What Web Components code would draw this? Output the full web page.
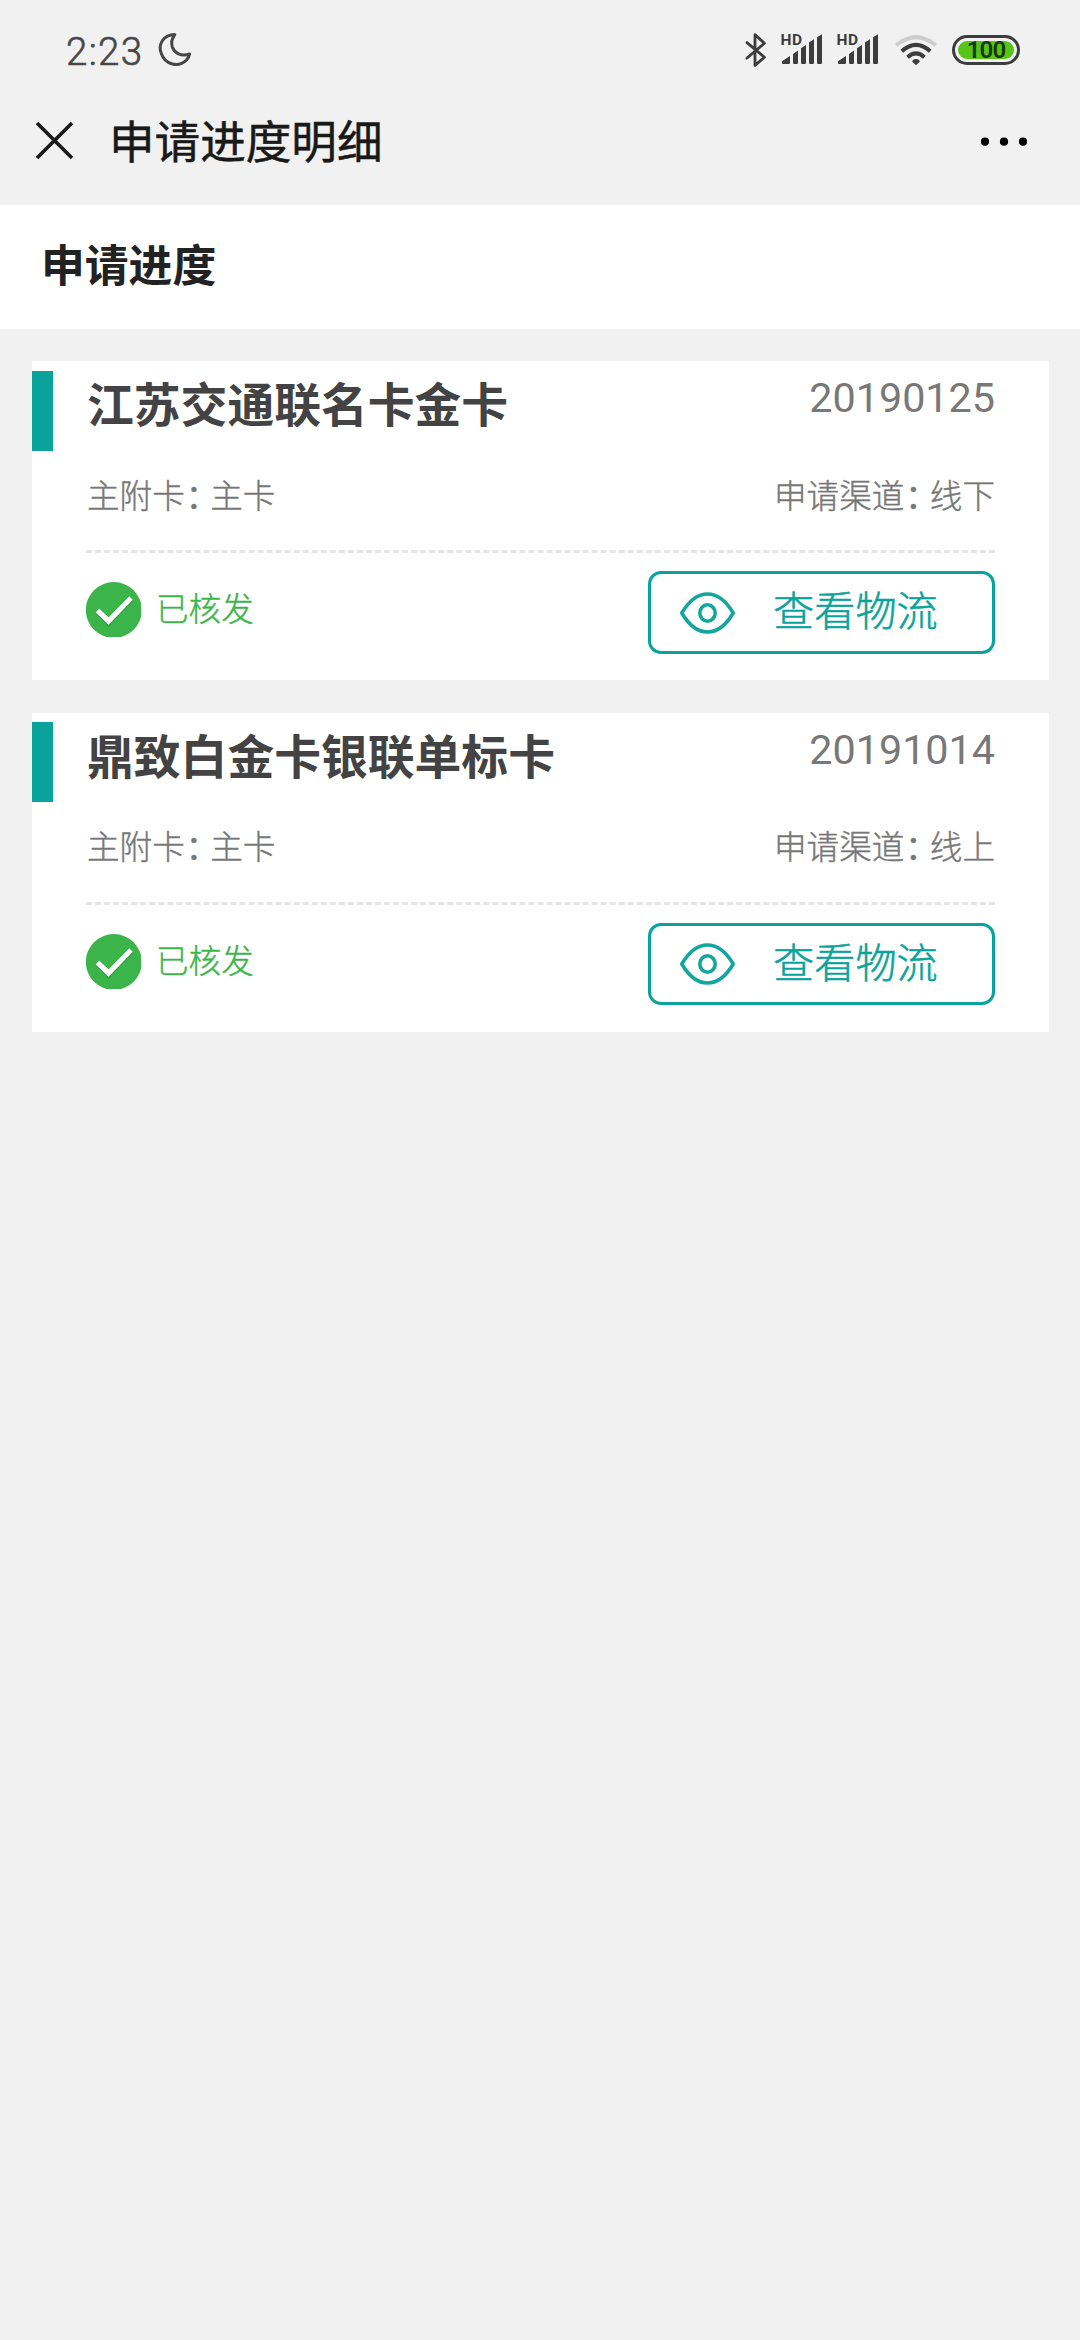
<!DOCTYPE html>
<html lang="zh-CN">
<head>
<meta charset="utf-8">
<title>申请进度明细</title>
<style>
html,body{margin:0;padding:0;background:#f1f1f1}
body{width:1080px;height:2340px;overflow:hidden;font-family:"Noto Sans CJK SC",sans-serif}
</style>
</head>
<body>
<progress-page></progress-page>
<script>
function define(name, html){
  customElements.define(name, class extends HTMLElement{
    constructor(){
      super();
      this.attachShadow({mode:'open'}).innerHTML = html;
    }
  });
}

define('signal-icon', `
<style>:host{display:block;width:42px;height:36px}svg{display:block}text{font:700 15.5px Roboto,sans-serif;letter-spacing:.6px}</style>
<svg width="42" height="36" viewBox="0 0 42 36" fill="#3c3c3c">
<text x="-.5" y="14.5">HD</text>
<path d="M1 33V31.3L9 26V33a1 1 0 0 1-1 1H2a1 1 0 0 1-1-1zM12 24l5-3.6V33a1 1 0 0 1-1 1H13a1 1 0 0 1-1-1zM20 18.3l5-3.4V33a1 1 0 0 1-1 1H21a1 1 0 0 1-1-1zM28 12.6l5-3.4V33a1 1 0 0 1-1 1H29a1 1 0 0 1-1-1zM36 7.2l5-3V33a1 1 0 0 1-1 1H37a1 1 0 0 1-1-1z"/>
</svg>`);

define('battery-icon', `
<style>:host{display:flex;box-sizing:border-box;width:68px;height:30px;border:3.4px solid #3c3c3c;border-radius:15px;padding:3px}
span{flex:1;display:flex;align-items:center;justify-content:center;background:#57c417;border-radius:9px;color:#17380a;font:600 24px/18px Roboto,sans-serif;letter-spacing:-.9px}</style>
<span><slot></slot></span>`);

define('status-bar', `
<style>
:host{display:flex;box-sizing:border-box;height:74px;padding:0 60px 0 66px;align-items:flex-start;color:#464646}
.time{font:300 38.5px/44px Roboto,sans-serif;-webkit-text-stroke:.6px #464646;margin-top:30px;width:91px;letter-spacing:1.3px}
svg{display:block}
.moon{margin-top:32px}
.right{display:flex;margin-left:auto;align-items:flex-start}
.bt{margin:32px 14px 0 0}
signal-icon{margin:30px 14px 0 0}
.wifi{margin:34px 14px 0 1px}
battery-icon{margin-top:35px}
</style>
<div class="time">2:23</div>
<svg class="moon" width="36" height="36" viewBox="0 0 36 36" fill="none" stroke="#464646" stroke-width="3" stroke-linejoin="round"><path d="M17.8 2.6C5.8 3 1 12.5 4.2 21.2C8.2 33 21.5 36 29.5 28C31.3 26 32.3 24 32.6 22C24 25 17.5 21 15.4 15.2C14 11 14.8 6.5 17.8 2.6Z"/></svg>
<div class="right">
<svg class="bt" width="22" height="36" viewBox="0 0 22 36" fill="none" stroke="#3c3c3c" stroke-width="2.8" stroke-linejoin="round" stroke-linecap="round"><path d="M2 10.6L19.4 25.2L10 33.4V2.6L19.4 11.2L2 26"/></svg>
<signal-icon></signal-icon><signal-icon></signal-icon>
<svg class="wifi" width="44" height="34" viewBox="0 0 44 34" fill="none" stroke="#3c3c3c" stroke-width="4" stroke-linecap="butt"><path stroke="#cdcdcd" d="M2.3 11.2Q22 -5 41.7 11.2"/><path d="M7.8 17.2Q22 4.6 36.200 17.200"/><path d="M13.600 23.200Q22 15.600 30.400 23.200"/><path stroke="none" fill="#3c3c3c" d="M22 31.200L18 27.400Q19 25 22 25T26 27.400Z"/></svg>
<battery-icon>100</battery-icon>
</div>`);

define('nav-bar', `
<style>
:host{display:flex;box-sizing:border-box;height:131px;align-items:flex-start;padding:0 52px 0 34px}
svg{display:block}
.close{margin-top:46px}
h1{margin:33px 0 0 34px;font-weight:400;font-size:45.6px;line-height:64px;color:#191919;-webkit-text-stroke:.5px #191919}
.more{margin:62px 0 0 auto}
</style>
<svg class="close" width="41" height="41" viewBox="0 0 41 41" stroke="#191919" stroke-width="3.6"><path d="M3 3L38 38M38 3L3 38"/></svg>
<h1><slot></slot></h1>
<svg class="more" width="48" height="12" viewBox="0 0 48 12"><circle cx="5" cy="5.700" r="4.100"/><circle cx="24" cy="5.700" r="4.100"/><circle cx="43" cy="5.700" r="4.100"/></svg>`);

define('section-title', `
<style>:host{display:block;box-sizing:border-box;height:124px;background:#fff;padding:26px 0 0 41px}
h2{margin:0;font-size:43.8px;line-height:64px;color:#222;font-weight:700}</style>
<h2><slot></slot></h2>`);

define('track-button', `
<style>
button{display:flex;box-sizing:border-box;width:347px;height:var(--button-height,83px);margin:0;padding:0 0 0 29px;border:3px solid #0aa39c;border-radius:13px;background:#fff;color:#0aa39c;align-items:flex-start;font:300 41.2px/60px "Noto Sans CJK SC",sans-serif;-webkit-text-stroke:.5px #0aa39c}
:host{display:block}
svg{display:block;margin-top:var(--eye-top,18px)}
span{margin-left:38px;margin-top:4px}
</style>
<button><svg width="55" height="42" viewBox="0 0 55 42" fill="none" stroke="#12a69f" stroke-width="3.600"><path stroke-linejoin="round" d="M1.800 21Q13 2 27.500 2T53.200 21Q42 40 27.500 40T1.800 21Z"/><ellipse cx="27.500" cy="21" rx="7.700" ry="8.200"/></svg><span><slot></slot></span></button>`);

define('apply-card', `
<style>
:host{display:block;box-sizing:border-box;height:319px;background:#fff;margin:0 31px 33px 32px}
.row{display:flex;justify-content:space-between;align-items:flex-start}
.head{height:var(--head-height,109px)}
.mark{width:21px;height:80px;margin-top:var(--mark-top,10px);background:#0aa39c}
h3{margin:9px 0 0 34px;font-size:46.8px;line-height:64px;font-weight:700;color:#434343;white-space:nowrap}
.date{margin:13px 54px 0 auto;font:400 41.3px/48px Roboto,sans-serif;color:#787878}
.meta{height:calc(189px - var(--head-height,109px));padding:0 54px 0 55px;font-weight:300;font-size:32.600px;line-height:48px;color:#777;-webkit-text-stroke:.4px #777}
.line{margin:0 54px;border-top:3px dashed #e5e5e5}
.foot{padding:18px 54px 0 54px}
.state{display:flex;align-items:flex-start;color:#3bb44a;font-weight:300;font-size:32.600px;line-height:48px;-webkit-text-stroke:.4px #3bb44a}
.state svg{display:block;margin-top:11px}
.state span{margin:12px 0 0 15px}
</style>
<div class="row head"><div class="mark"></div><h3><slot name="name"></slot></h3><div class="date"><slot name="date"></slot></div></div>
<div class="row meta"><slot name="kind"></slot><slot name="channel"></slot></div>
<div class="line"></div>
<div class="row foot">
<div class="state"><svg width="55" height="55" viewBox="0 0 55 55"><circle cx="27.800" cy="28" r="28" fill="#3bb44a"/><path d="M11.500 29L22.500 39.500L45 16.500" fill="none" stroke="#2ca33d" stroke-width="7"/><path d="M11.500 28.500L22.500 39L45 16" fill="none" stroke="#fff" stroke-width="5.200"/></svg><span><slot name="state"></slot></span></div>
<track-button><slot name="action"></slot></track-button>
</div>`);

define('label-colon', `
<style>:host{display:inline-block;width:25.500px;white-space:nowrap;font-weight:400}span{margin-left:1px;letter-spacing:-9px}</style><span>：</span>`);

define('progress-page', `
<style>
:host{display:block;width:1080px;height:2340px;background:#f1f1f1}
main{display:flex;flex-direction:column;padding-top:32px}
.foot-card{--mark-top:9px;--head-height:108px;--button-height:82px;--eye-top:17px}
</style>
<status-bar></status-bar>
<nav-bar>申请进度明细</nav-bar>
<section-title>申请进度</section-title>
<main>
<apply-card><span slot="name">江苏交通联名卡金卡</span><span slot="date">20190125</span><span slot="kind">主附卡<label-colon></label-colon>主卡</span><span slot="channel">申请渠道<label-colon></label-colon>线下</span><span slot="state">已核发</span><span slot="action">查看物流</span></apply-card>
<apply-card class="foot-card"><span slot="name">鼎致白金卡银联单标卡</span><span slot="date">20191014</span><span slot="kind">主附卡<label-colon></label-colon>主卡</span><span slot="channel">申请渠道<label-colon></label-colon>线上</span><span slot="state">已核发</span><span slot="action">查看物流</span></apply-card>
</main>`);
</script>
</body>
</html>
